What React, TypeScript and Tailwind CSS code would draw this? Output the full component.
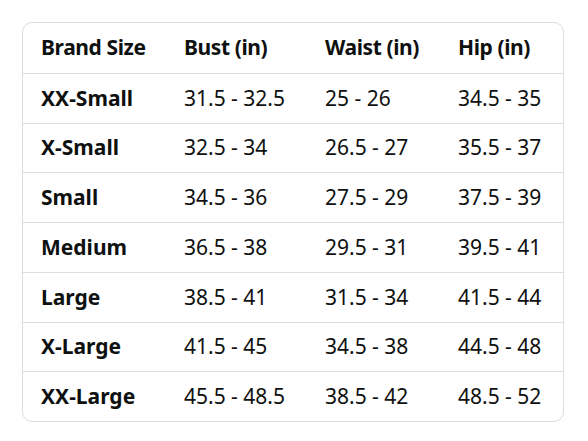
import React from "react";

const rows: [string, string, string, string][] = [
  ["XX-Small", "31.5 - 32.5", "25 - 26", "34.5 - 35"],
  ["X-Small", "32.5 - 34", "26.5 - 27", "35.5 - 37"],
  ["Small", "34.5 - 36", "27.5 - 29", "37.5 - 39"],
  ["Medium", "36.5 - 38", "29.5 - 31", "39.5 - 41"],
  ["Large", "38.5 - 41", "31.5 - 34", "41.5 - 44"],
  ["X-Large", "41.5 - 45", "34.5 - 38", "44.5 - 48"],
  ["XX-Large", "45.5 - 48.5", "38.5 - 42", "48.5 - 52"],
];

export default function App() {
  return (
    <div
      className="w-[588px] h-[441px] bg-white pt-[22px] pl-[22px] text-[#0f1111]"
      style={{ fontFamily: '"Noto Sans", "Open Sans", sans-serif' }}
    >
      <div className="w-[542px] h-[400px] rounded-[10px] border border-[#dddddd] overflow-hidden flex flex-col">
        <div className="grid grid-cols-[143px_141px_133px_1fr] items-center h-[50px] pl-[18px] text-[21px] leading-none font-bold tracking-[-0.4px]">
          <div>Brand Size</div>
          <div>Bust (in)</div>
          <div>Waist (in)</div>
          <div>Hip (in)</div>
        </div>
        {rows.map((r) => (
          <div
            key={r[0]}
            className="grid grid-cols-[143px_141px_133px_1fr] items-center h-[50px] pl-[18px] text-[21px] leading-none border-t border-[#dddddd]"
          >
            <div className="font-bold">{r[0]}</div>
            <div>{r[1]}</div>
            <div>{r[2]}</div>
            <div>{r[3]}</div>
          </div>
        ))}
      </div>
    </div>
  );
}
